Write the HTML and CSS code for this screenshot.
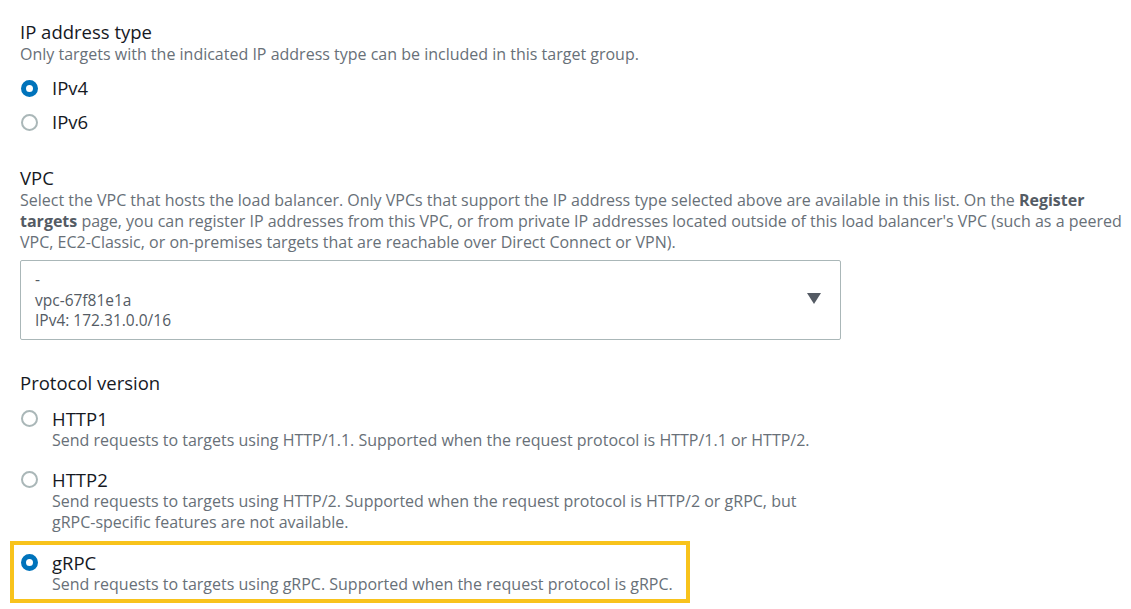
FILE: index.html
```html
<!DOCTYPE html>
<html lang="en">
<head>
<meta charset="utf-8">
<title>Target group settings</title>
<link rel="stylesheet" href="styles.css">
</head>
<body>
<main class="form">
  <section class="field field-ip">
    <div class="label">IP address type</div>
    <div class="desc">Only targets with the indicated IP address type can be included in this target group.</div>
    <div class="radios">
      <div class="radio-row"><span class="radio checked"></span><span class="radio-label">IPv4</span></div>
      <div class="radio-row"><span class="radio"></span><span class="radio-label">IPv6</span></div>
    </div>
  </section>

  <section class="field field-vpc">
    <div class="label">VPC</div>
    <div class="desc desc-wide">Select the VPC that hosts the load balancer. Only VPCs that support the IP address type selected above are available in this list. On the <b>Register</b><br><b>targets</b> page, you can register IP addresses from this VPC, or from private IP addresses located outside of this load balancer's VPC (such as a peered<br>VPC, EC2-Classic, or on-premises targets that are reachable over Direct Connect or VPN).</div>
    <div class="select">
      <div class="select-text">
        <div>-</div>
        <div>vpc-67f81e1a</div>
        <div>IPv4: 172.31.0.0/16</div>
      </div>
      <svg class="caret" width="14" height="11" viewBox="0 0 14 11"><path d="M0 0 H14 L7 11 Z" fill="#545b64"/></svg>
    </div>
  </section>

  <section class="field field-proto">
    <div class="label">Protocol version</div>
    <div class="opts">
      <div class="opt">
        <span class="radio"></span>
        <div class="opt-body">
          <div class="radio-label">HTTP1</div>
          <div class="desc">Send requests to targets using HTTP/1.1. Supported when the request protocol is HTTP/1.1 or HTTP/2.</div>
        </div>
      </div>
      <div class="opt">
        <span class="radio"></span>
        <div class="opt-body">
          <div class="radio-label">HTTP2</div>
          <div class="desc">Send requests to targets using HTTP/2. Supported when the request protocol is HTTP/2 or gRPC, but<br>gRPC-specific features are not available.</div>
        </div>
      </div>
      <div class="opt opt-highlight">
        <span class="radio checked"></span>
        <div class="opt-body">
          <div class="radio-label">gRPC</div>
          <div class="desc">Send requests to targets using gRPC. Supported when the request protocol is gRPC.</div>
        </div>
      </div>
    </div>
  </section>
</main>
</body>
</html>
```

FILE: styles.css
```css
* { box-sizing: border-box; }
html, body { margin: 0; background: #ffffff; }
body {
  font-family: "Open Sans", "Noto Sans", sans-serif;
  color: #16191f;
  width: 1131px;
  height: 609px;
  overflow: hidden;
}
.form {
  padding: 21px 0 0 20px;
  display: flex;
  flex-direction: column;
}
.label {
  font-size: 18.5px;
  line-height: 22px;
  color: #16191f;
}
.desc {
  font-size: 16px;
  line-height: 21px;
  color: #687078;
  margin-top: 1px;
  white-space: nowrap;
}
.desc b { font-weight: 700; color: #545b64; }
.radios {
  display: flex;
  flex-direction: column;
  gap: 12px;
  margin-top: 12px;
}
.radio-row {
  display: flex;
  align-items: center;
  height: 22px;
}
.radio {
  flex: none;
  width: 17px;
  height: 17px;
  border-radius: 50%;
  border: 2px solid #aab7b8;
  background: #fff;
  margin-left: 1px;
  margin-right: 14px;
}
.radio.checked {
  border: 5px solid #0073bb;
}
.radio-label {
  font-size: 18.5px;
  line-height: 22px;
  color: #16191f;
}
.field-vpc { margin-top: 34px; }
.select {
  margin-top: 7px;
  width: 821px;
  height: 80px;
  border: 1px solid #aab7b8;
  border-radius: 2px;
  display: flex;
  align-items: center;
  justify-content: space-between;
  padding: 0 19px 0 14px;
}
.select-text {
  font-size: 15.5px;
  line-height: 20.5px;
  color: #545b64;
}
.caret { display: block; margin-top: -3px; }
.field-proto { margin-top: 32px; }
.opts {
  display: flex;
  flex-direction: column;
  margin-top: 14px;
  gap: 18px;
}
.opt {
  display: flex;
  align-items: flex-start;
}
.opt .radio { margin-top: 2px; }
.opt .desc { margin-top: 0; }
.opt-highlight {
  margin-left: -10px;
  margin-top: -10px;
  width: 680px;
  border: 4px solid #f8c31c;
  padding: 7px 0 4px 6px;
}
```
